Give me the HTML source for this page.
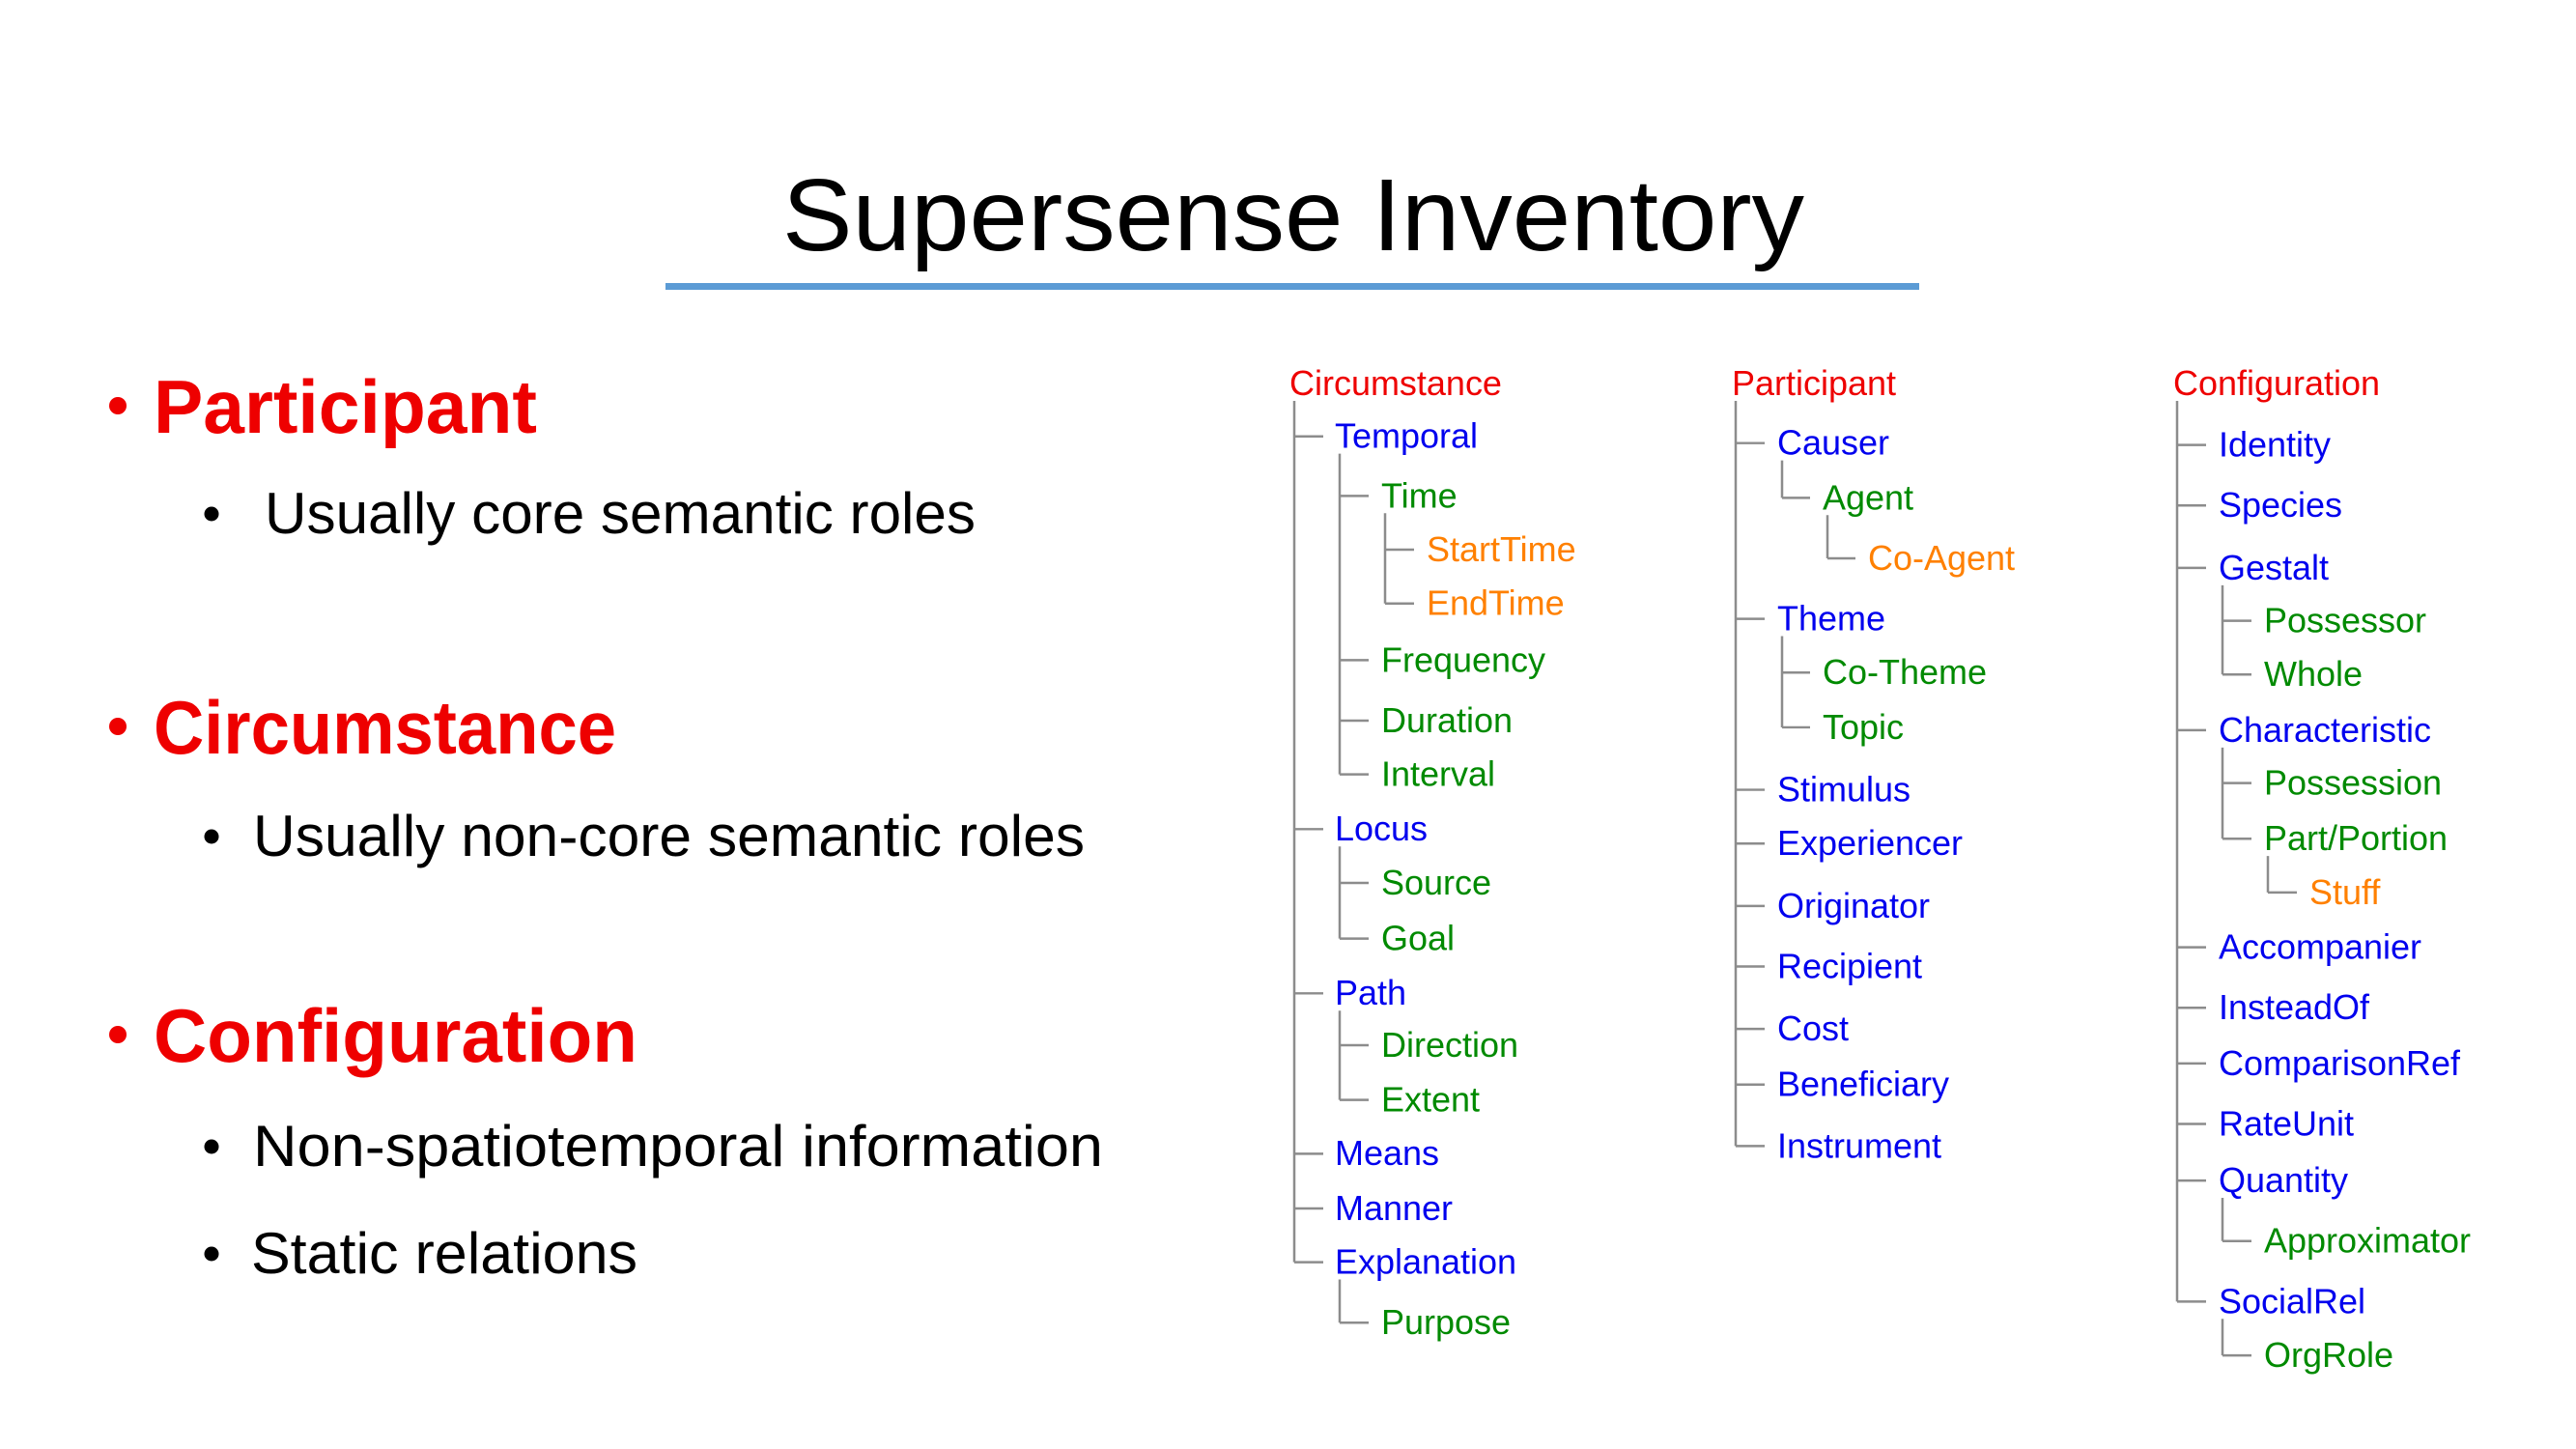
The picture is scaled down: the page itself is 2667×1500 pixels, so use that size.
<!DOCTYPE html>
<html><head><meta charset="utf-8"><style>
html,body{margin:0;padding:0;background:#fff;}
svg{display:block;}
.t{font-family:"Liberation Sans",Arial,sans-serif;font-size:36px;}
.r{fill:#ee0000}.b{fill:#0000ee}.g{fill:#008a00}.o{fill:#ff8000}
</style></head><body>
<svg width="2667" height="1500" viewBox="0 0 2667 1500" xmlns="http://www.w3.org/2000/svg">
<rect width="2667" height="1500" fill="#fff"/>
<text x="810" y="259" font-family="Liberation Sans, sans-serif" font-size="106" fill="#000" textLength="1058" lengthAdjust="spacingAndGlyphs">Supersense Inventory</text>
<rect x="689" y="293" width="1298" height="7" fill="#5b9bd5"/>

<g font-family="Liberation Sans, sans-serif">
<circle cx="122" cy="420" r="9" fill="#ee0000"/>
<text x="159" y="448" font-size="78" font-weight="bold" fill="#ee0000" textLength="397" lengthAdjust="spacingAndGlyphs">Participant</text>
<circle cx="219" cy="532" r="7.5" fill="#000"/>
<text x="274" y="552" font-size="60" fill="#000" textLength="736" lengthAdjust="spacingAndGlyphs">Usually core semantic roles</text>

<circle cx="122" cy="752" r="9" fill="#ee0000"/>
<text x="159" y="780" font-size="78" font-weight="bold" fill="#ee0000" textLength="479" lengthAdjust="spacingAndGlyphs">Circumstance</text>
<circle cx="219" cy="866" r="7.5" fill="#000"/>
<text x="262" y="886" font-size="60" fill="#000" textLength="861" lengthAdjust="spacingAndGlyphs">Usually non-core semantic roles</text>

<circle cx="122" cy="1071" r="9" fill="#ee0000"/>
<text x="159" y="1099" font-size="78" font-weight="bold" fill="#ee0000" textLength="501" lengthAdjust="spacingAndGlyphs">Configuration</text>
<circle cx="219" cy="1187" r="7.5" fill="#000"/>
<text x="262" y="1207" font-size="60" fill="#000" textLength="880" lengthAdjust="spacingAndGlyphs">Non-spatiotemporal information</text>
<circle cx="219" cy="1298" r="7.5" fill="#000"/>
<text x="260" y="1318" font-size="60" fill="#000" textLength="400" lengthAdjust="spacingAndGlyphs">Static relations</text>
</g>

<g transform="translate(0,1.4) scale(1,0.9941)">
<g stroke="#8c8c8c" stroke-width="2.5" fill="none">
<path d="M1340 416V1313 M1340 453H1370 M1340 862H1370 M1340 1033H1370 M1340 1200H1370 M1340 1257H1370 M1340 1313H1370"/>
<path d="M1387 471V805 M1387 515H1417 M1387 686H1417 M1387 749H1417 M1387 805H1417"/>
<path d="M1434 533V627 M1434 571H1464 M1434 627H1464"/>
<path d="M1387 880V976 M1387 918H1417 M1387 976H1417"/>
<path d="M1387 1051V1144 M1387 1087H1417 M1387 1144H1417"/>
<path d="M1387 1331V1376 M1387 1376H1417"/>
<path d="M1797 416V1192 M1797 460H1827 M1797 643H1827 M1797 821H1827 M1797 877H1827 M1797 942H1827 M1797 1005H1827 M1797 1070H1827 M1797 1128H1827 M1797 1192H1827"/>
<path d="M1845 478V517 M1845 517H1874"/>
<path d="M1892 535V580 M1892 580H1921"/>
<path d="M1845 661V756 M1845 699H1874 M1845 756H1874"/>
<g transform="translate(-6,0)">
<path d="M2260 416V1354 M2260 462H2290 M2260 525H2290 M2260 590H2290 M2260 759H2290 M2260 985H2290 M2260 1048H2290 M2260 1106H2290 M2260 1169H2290 M2260 1228H2290 M2260 1354H2290"/>
<path d="M2307 608V701 M2307 645H2337 M2307 701H2337"/>
<path d="M2307 777V872 M2307 814H2337 M2307 872H2337"/>
<path d="M2354 890V928 M2354 928H2384"/>
<path d="M2307 1246V1291 M2307 1291H2337"/>
<path d="M2307 1372V1410 M2307 1410H2337"/>
</g>
</g>

<g class="t">
<text class="r" x="1335" y="410">Circumstance</text>
<text class="b" x="1382" y="465">Temporal</text>
<text class="g" x="1430" y="527">Time</text>
<text class="o" x="1477" y="583">StartTime</text>
<text class="o" x="1477" y="639">EndTime</text>
<text class="g" x="1430" y="698">Frequency</text>
<text class="g" x="1430" y="761">Duration</text>
<text class="g" x="1430" y="817">Interval</text>
<text class="b" x="1382" y="874">Locus</text>
<text class="g" x="1430" y="930">Source</text>
<text class="g" x="1430" y="988">Goal</text>
<text class="b" x="1382" y="1045">Path</text>
<text class="g" x="1430" y="1099">Direction</text>
<text class="g" x="1430" y="1156">Extent</text>
<text class="b" x="1382" y="1212">Means</text>
<text class="b" x="1382" y="1269">Manner</text>
<text class="b" x="1382" y="1325">Explanation</text>
<text class="g" x="1430" y="1388">Purpose</text>

<text class="r" x="1793" y="410">Participant</text>
<text class="b" x="1840" y="472">Causer</text>
<text class="g" x="1887" y="529">Agent</text>
<text class="o" x="1934" y="592">Co-Agent</text>
<text class="b" x="1840" y="655">Theme</text>
<text class="g" x="1887" y="711">Co-Theme</text>
<text class="g" x="1887" y="768">Topic</text>
<text class="b" x="1840" y="833">Stimulus</text>
<text class="b" x="1840" y="889">Experiencer</text>
<text class="b" x="1840" y="954">Originator</text>
<text class="b" x="1840" y="1017">Recipient</text>
<text class="b" x="1840" y="1082">Cost</text>
<text class="b" x="1840" y="1140">Beneficiary</text>
<text class="b" x="1840" y="1204">Instrument</text>

<g transform="translate(-6,0)">
<text class="r" x="2256" y="410">Configuration</text>
<text class="b" x="2303" y="474">Identity</text>
<text class="b" x="2303" y="537">Species</text>
<text class="b" x="2303" y="602">Gestalt</text>
<text class="g" x="2350" y="657">Possessor</text>
<text class="g" x="2350" y="713">Whole</text>
<text class="b" x="2303" y="771">Characteristic</text>
<text class="g" x="2350" y="826">Possession</text>
<text class="g" x="2350" y="884">Part/Portion</text>
<text class="o" x="2397" y="940">Stuff</text>
<text class="b" x="2303" y="997">Accompanier</text>
<text class="b" x="2303" y="1060">InsteadOf</text>
<text class="b" x="2303" y="1118">ComparisonRef</text>
<text class="b" x="2303" y="1181">RateUnit</text>
<text class="b" x="2303" y="1240">Quantity</text>
<text class="g" x="2350" y="1303">Approximator</text>
<text class="b" x="2303" y="1366">SocialRel</text>
<text class="g" x="2350" y="1422">OrgRole</text>
</g>
</g>
</g>
</svg>
</body></html>
